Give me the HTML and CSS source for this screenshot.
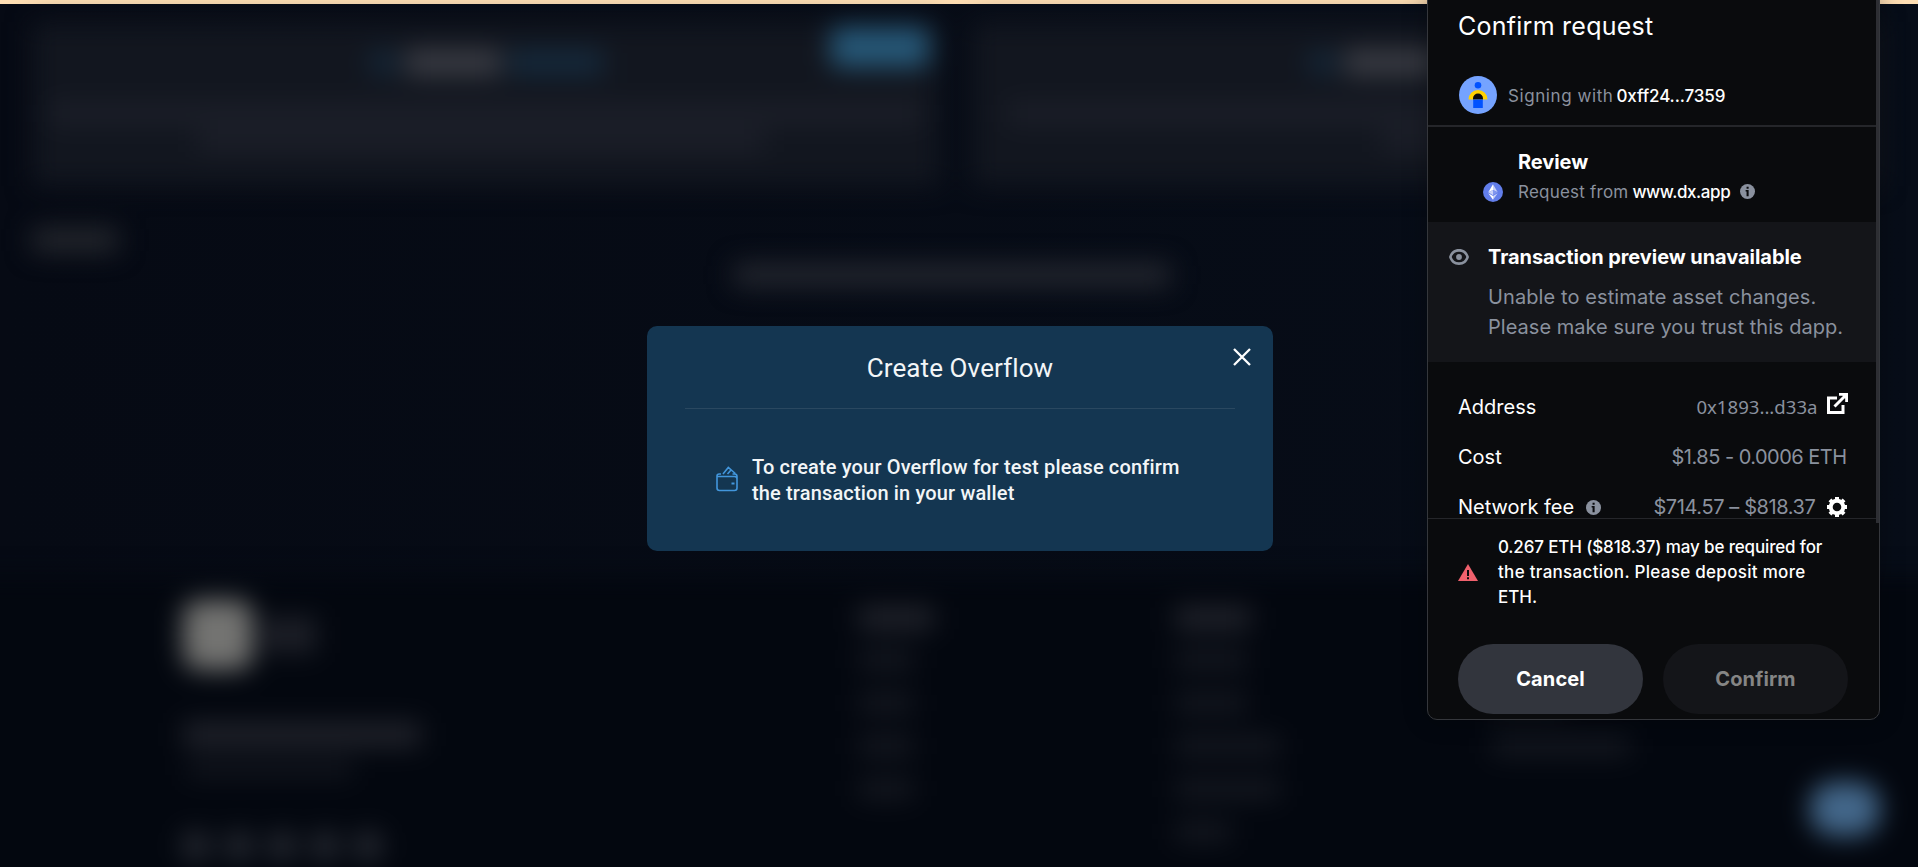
FILE: index.html
```html
<!DOCTYPE html>
<html lang="en">
<head>
<meta charset="utf-8">
<title>Create Overflow</title>
<link rel="stylesheet" href="styles.css">
</head>
<body>
<div class="top-strip"></div>
<div class="page" aria-hidden="true">
  <div class="cards">
    <div class="card">
      <div class="card-title"><i class="dot"></i><i class="name"></i><i class="accent"></i></div>
      <i class="cta"></i>
      <i class="line line-a"></i>
      <i class="line line-b"></i>
    </div>
    <div class="card">
      <div class="card-title second"><i class="dot"></i><i class="name"></i><i class="accent"></i></div>
      <i class="line line-c"></i>
      <i class="line line-d"></i>
    </div>
  </div>
  <i class="view-all"></i>
  <i class="empty-note"></i>
  <div class="footer">
    <div class="brand">
      <div class="logo-row"><i class="logo"></i><i class="logo-name"></i></div>
      <i class="tag-a"></i>
      <i class="tag-b"></i>
      <div class="social"><i></i><i></i><i></i><i></i><i></i></div>
    </div>
    <div class="col first"><i class="head"></i><i class="s"></i><i class="s"></i><i class="s"></i><i class="s"></i></div>
    <div class="col mid"><i class="head"></i><i class="m"></i><i class="m"></i><i class="l"></i><i class="l"></i><i class="s"></i></div>
    <div class="col last"><i class="head"></i><i class="m"></i><i class="m"></i><i class="xl"></i></div>
  </div>
  <i class="chat"></i>
</div>

<div class="modal">
  <svg class="close" viewBox="0 0 18 18"><path d="M1 1 17 17M17 1 1 17"/></svg>
  <h2 class="modal-title"><span>Create Overflow</span></h2>
  <div class="modal-body">
    <svg class="wallet" viewBox="0 0 22 26"><path d="M5 8H3.200C2 8 1 8.700 1 10v12c0 1.600 1 2.500 2.500 2.500h15c1.600 0 2.500-1 2.500-2.500V10.500M1.200 10.500H18.500c1.500 0 2.500.8 2.500 2.300M16.500 8h2c1.500 0 2.500.8 2.500 2.500M7 8l5.300-6.500 7 6M11.500 8l3.500-4"/><path class="fill" d="M15.500 16.500h3v2h-3z"/></svg>
    <p><span>To create your Overflow for test please confirm</span><br><span>the transaction in your wallet</span></p>
  </div>
</div>

<div class="panel">
  <div class="scroll">
    <h1 class="title"><span>Confirm request</span></h1>
    <div class="signer">
      <svg class="avatar" viewBox="0 0 38 38"><circle cx="19" cy="19" r="19" fill="#75a3ff"/><circle cx="19" cy="9.300" r="3.300" fill="#0052ff"/><path d="M9.500 23.500a9.500 9.500 0 0 1 19 0z" fill="#ffd200"/><path d="M14 23.500v-1a5 5 0 0 1 10 0v1z" fill="#0a0b0d"/><path d="M14.200 23.500h9.600V32h-9.600z" fill="#0052ff"/></svg>
      <p><span class="muted signing">Signing with</span><span class="account">0xff24...7359</span></p>
    </div>
    <div class="review">
      <svg class="eth" viewBox="0 0 20 20"><circle cx="10" cy="10" r="10" fill="#627eea"/><path d="M10 2.300v5.800l4.700 2.200z" fill="#c9d2f8"/><path d="M10 2.300 5.300 10.300 10 8.100z" fill="#fff"/><path d="m10 13.200 4.700-2.900L10 8.100z" fill="#8197ee"/><path d="M5.300 10.300 10 13.200V8.100z" fill="#c9d2f8"/><path d="M10 14.100v3.700l4.700-6.500z" fill="#c9d2f8"/><path d="M10 17.800v-3.700l-4.700-2.800z" fill="#fff"/></svg>
      <div>
        <h3><span>Review</span></h3>
        <p><span class="muted source">Request from</span><span class="host">www.dx.app</span>
        <svg class="info" viewBox="0 0 16 16"><circle cx="8" cy="8" r="8"/><path d="M7 3h2.200v2H7zM6 6.500h3.200V13H7V8H6z"/></svg></p>
      </div>
    </div>
    <div class="notice">
      <svg class="eye" viewBox="0 0 20 16"><path fill-rule="evenodd" d="M10 0C5 0 1.500 3 0 8c1.500 5 5 8 10 8s8.500-3 10-8C18.500 3 15 0 10 0zm0 2.700c3.600 0 6.100 1.900 7.300 5.300-1.200 3.400-3.700 5.300-7.300 5.300S3.900 11.400 2.700 8C3.900 4.600 6.400 2.700 10 2.700z"/><circle cx="10" cy="8" r="2.900"/></svg>
      <div>
        <h3><span>Transaction preview unavailable</span></h3>
        <p><span class="unable">Unable to estimate asset changes.</span><br><span>Please make sure you trust this dapp.</span></p>
      </div>
    </div>
    <dl class="details">
      <div><dt><span>Address</span></dt><dd class="hex"><span>0x1893...d33a</span>
        <svg class="ext" viewBox="0 0 21 21"><path d="M10 5H1.500v14.500H16V12M7.500 13.500 18 3"/><path class="fill" d="M12 0h9v9h-2.800V5.500L15.500 2.800H12z"/></svg></dd></div>
      <div><dt><span>Cost</span></dt><dd><span class="cost">$1.85 - 0.0006 ETH</span></dd></div>
      <div><dt><span>Network fee</span><svg class="info" viewBox="0 0 16 16"><circle cx="8" cy="8" r="8"/><path d="M7 3h2.200v2H7zM6 6.500h3.200V13H7V8H6z"/></svg></dt><dd><span class="fee">$714.57 – $818.37</span>
        <svg class="gear" viewBox="0 0 20 20"><circle cx="10" cy="10" r="6.300"/><path d="M10 0v4M10 16v4M0 10h4M16 10h4M2.930 2.930 5.700 5.700M14.300 14.300l2.770 2.770M2.930 17.070 5.700 14.300M14.300 5.700l2.770-2.770"/></svg></dd></div>
    </dl>
  </div>
  <div class="actions">
    <div class="warning">
      <svg class="alert" viewBox="0 0 20 17"><path d="M10 0 20 17H0z" fill="#f0616d"/><path d="M9 6h2v6H9zM9 13.300h2v2H9z" fill="#0a0b0d"/></svg>
      <p><span class="warn-first">0.267 ETH ($818.37) may be required for</span><br><span class="warn-second">the transaction. Please deposit more</span><br><span>ETH.</span></p>
    </div>
    <div class="buttons">
      <button class="cancel"><span>Cancel</span></button>
      <button class="confirm"><span>Confirm</span></button>
    </div>
  </div>
  <i class="thumb"></i>
</div>
</body>
</html>
```
FILE: styles.css
```css
* { box-sizing: border-box; }
body {
  margin: 0;
  position: relative;
  width: 1918px;
  height: 867px;
  overflow: hidden;
  background: linear-gradient(90deg, #060a14, #070d18);
  font-family: Inter, "Noto Sans", sans-serif;
  color: #fff;
}
h1, h2, h3, p, dl, dd { margin: 0; }
span { white-space: nowrap; }
i { display: block; }

.top-strip { height: 4px; background: #ffdfb4; }

/* Dimmed page behind the dialog */
.page { height: 863px; padding: 18px 32px 0; filter: blur(13px); }
.cards { display: grid; grid-template-columns: 908px 908px; gap: 32px; height: 164px; }
.card { position: relative; background: #12161f; padding-top: 28px; }
.card-title { display: flex; gap: 8px; height: 25px; margin-left: 337px; }
.card-title.second { margin-left: 336px; }
.card-title .dot { width: 28px; background: #14283a; border-radius: 12px; }
.card-title .name { width: 96px; background: #3c3e46; }
.card-title .accent { width: 94px; background: #152a3d; }
.card .cta { position: absolute; left: 799px; top: 5px; width: 98px; height: 40px; border-radius: 6px; background: #265878; }
.line { height: 21px; background: #1c1f29; }
.line-a { margin: 28px 18px 0; }
.line-b { margin: 6px 0 0 166px; width: 566px; }
.line-c { margin: 28px 36px 0; }
.line-d { margin: 6px 0 0 410px; width: 100px; }
.view-all { margin-top: 42px; width: 86px; height: 24px; background: #24272d; }
.empty-note { margin: 12px 0 0 702px; width: 436px; height: 22px; background: #252830; }
.footer { display: flex; position: relative; height: 310px; margin: 291px -60px -30px; background: #03070f; padding-left: 211px; }
.brand { width: 675px; padding-top: 23px; }
.logo-row { display: flex; gap: 11px; align-items: center; }
.logo { width: 70px; height: 70px; border-radius: 16px; background: #737371; }
.logo-name { width: 52px; height: 36px; background: #1d1f27; }
.tag-a { margin-top: 52px; width: 238px; height: 25px; background: #20222a; }
.tag-b { margin: 13px 0 0 4px; width: 166px; height: 18px; background: #12151d; }
.social { display: flex; gap: 17px; margin-top: 54px; }
.social i { width: 26px; height: 28px; border-radius: 6px; background: #272a32; }
.col { padding-top: 29px; width: 317px; display: flex; flex-direction: column; gap: 23px; }
.col i { height: 20px; background: #151820; }
.col .head { width: 76px; height: 24px; margin-bottom: -3px; background: #20222a; }
.col .s { width: 56px; }
.col .m { width: 72px; }
.col .l { width: 105px; }
.col .xl { width: 138px; }
.chat { position: absolute; left: 1810px; top: 778px; width: 70px; height: 54px; border-radius: 24px; background: #43678a; }

/* Create Overflow dialog */
.modal {
  position: absolute; left: 647px; top: 326px; width: 626px; height: 225px;
  padding: 0 38px; border-radius: 10px; background: #143651; color: #f2f5f7;
  font-family: Roboto, sans-serif;
}
.close { position: absolute; right: 22.500px; top: 22px; width: 18px; height: 18px; fill: none; stroke: #fff; stroke-width: 2.300; }
.modal-title { height: 83px; padding-top: 27px; border-bottom: 1px solid #2a4860; text-align: center; font: 400 26px/30px Roboto, sans-serif; letter-spacing: .1px; }
.modal-body { display: flex; gap: 14px; padding: 45px 0 0 31px; font-weight: 500; font-size: 20px; line-height: 26px; letter-spacing: .15px; }
.wallet { width: 22px; height: 26px; margin-top: 12px; fill: none; stroke: #4296dc; stroke-width: 1.600; }
.wallet .fill { fill: #4296dc; stroke: none; }

/* Wallet popup */
.panel {
  position: absolute; left: 1427px; top: -10px; width: 453px; height: 730px;
  padding-top: 10px; border: 1px solid #35373c; border-radius: 10px; overflow: hidden;
  background: #0a0b0d; box-shadow: 0 0 24px rgba(0, 0, 0, .3);
}
.scroll { height: 517px; overflow: hidden; }
.title { height: 75px; padding: 7px 30px 0; font-size: 25px; line-height: 36px; font-weight: 400; letter-spacing: .25px; }
.signer { display: flex; gap: 11px; height: 51px; padding-left: 31px; border-bottom: 2px solid #25262a; }
.avatar { width: 38px; height: 38px; }
.signer p, .review p { font-size: 17px; line-height: 24px; display: flex; }
.signer p { padding-top: 8px; gap: 3px; }
.muted { color: #8a919e; }
.signing { letter-spacing: .58px; }
.account, .host { font-weight: 500; }
.account { letter-spacing: -.1px; }
.source { letter-spacing: .22px; }
.host { letter-spacing: -.42px; }
.review { display: flex; gap: 15px; height: 95px; padding: 20px 0 0 55px; }
.review p { padding-top: 3px; gap: 4px; }
.eth { width: 20px; height: 20px; margin-top: 35px; }
h3 { font-size: 20px; line-height: 30px; font-weight: 700; letter-spacing: -.06px; }
.info { width: 15px; height: 15px; fill: #8a919e; }
.info path { fill: #0a0b0d; }
.review .info { margin: 4px 0 0 6px; }
.notice { display: flex; gap: 19px; height: 140px; padding: 20px 0 0 21px; background: #141519; }
.notice p { font-size: 20px; line-height: 30px; padding-top: 10px; color: #8a919e; letter-spacing: .03px; }
.notice .unable { letter-spacing: .1px; }
.eye { width: 20px; height: 16px; margin-top: 7px; fill: #8a919e; }
.details { padding: 20px 32.500px 0 30px; font-size: 20px; }
.details > div { display: flex; justify-content: space-between; height: 50px; line-height: 50px; }
.details dt, .details dd { display: flex; }
.details dd { color: #8a919e; }
.details .hex { font-family: "Noto Sans", sans-serif; font-size: 18.600px; }
.cost { letter-spacing: -.52px; }
.fee { letter-spacing: -.4px; }
.details .info { margin: 18px 0 0 12px; }
.ext { width: 21px; height: 21px; margin: 11px -1px 0 9px; fill: none; stroke: #fff; stroke-width: 3; }
.ext .fill { fill: #fff; stroke: none; }
.gear { width: 20px; height: 20px; margin: 15px 0 0 11px; fill: none; stroke: #fff; stroke-width: 4; }
.actions { border-top: 1px solid #25262a; padding: 16px 31px 0 30px; }
.warning { display: flex; gap: 20px; height: 109px; font-size: 17px; line-height: 25px; font-weight: 500; }
.warn-first { letter-spacing: -.15px; }
.warn-second { letter-spacing: .3px; }
.alert { width: 20px; height: 17px; margin-top: 29px; }
.buttons { display: grid; grid-template-columns: 185px 185px; gap: 20px; }
.buttons button { height: 70px; border: 0; border-radius: 35px; padding: 0; font: 700 20px/70px Inter, sans-serif; letter-spacing: .1px; }
.cancel { background: #32353d; color: #fff; }
.confirm { background: #141519; color: #858585; }
.thumb { position: absolute; right: 0; top: 0; width: 3px; height: 532px; background: #2d2e33; }
```
